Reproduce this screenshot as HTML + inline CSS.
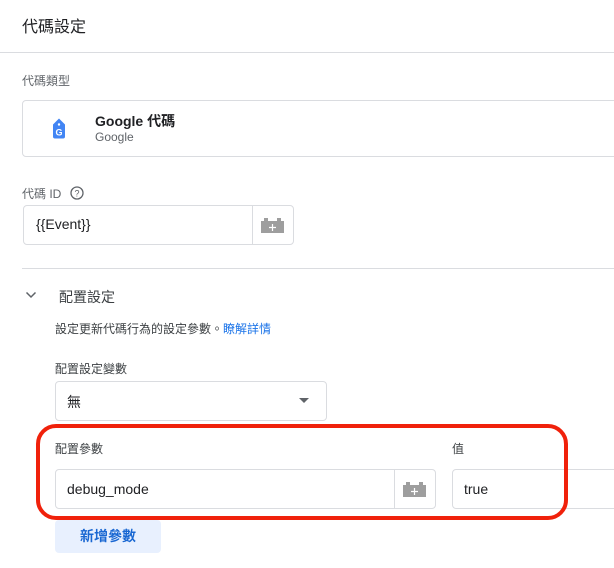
<!DOCTYPE html>
<html><head><meta charset="utf-8"><style>
*{box-sizing:border-box;margin:0;padding:0}
body{width:614px;height:568px;overflow:hidden;background:#fff;font-family:"Liberation Sans","Noto Sans CJK TC",sans-serif;color:#202124;position:relative}
.a{position:absolute;white-space:nowrap}
.box{position:absolute;border:1px solid #dadce0;border-radius:4px;background:#fff}
.lbl{font-size:12px;color:#5f6368}
</style></head><body>
<div class="a" style="left:22px;top:13px;font-size:16px;">代碼設定</div>
<div class="a" style="left:0;top:52px;width:614px;height:1px;background:#dadce0"></div>
<div class="a lbl" style="left:22px;top:72px">代碼類型</div>
<div class="box" style="left:22px;top:100px;width:600px;height:57px"></div>
<svg class="a" style="left:51px;top:117px" width="16" height="23" viewBox="0 0 16 22"><path d="M8 1 L14 7 V19 a2 2 0 0 1-2 2 H4 a2 2 0 0 1-2-2 V7 Z" fill="#4285f4"/><circle cx="8" cy="7" r="1.2" fill="#fff"/><text x="8" y="18" font-size="9" font-weight="bold" fill="#fff" text-anchor="middle" font-family="Liberation Sans">G</text></svg>
<div class="a" style="left:95px;top:111px;font-size:14px;font-weight:bold">Google 代碼</div>
<div class="a" style="left:95px;top:130px;font-size:12px;color:#5f6368">Google</div>
<div class="a lbl" style="left:22px;top:185px">代碼 ID</div>
<svg class="a" style="left:70px;top:186px" width="14" height="14" viewBox="0 0 14 14"><circle cx="7" cy="7" r="6" fill="none" stroke="#5f6368" stroke-width="1.3"/><text x="7" y="10.5" font-size="9" fill="#5f6368" text-anchor="middle" font-family="Liberation Sans">?</text></svg>
<div class="box" style="left:23px;top:205px;width:271px;height:40px"></div>
<div class="a" style="left:252px;top:206px;width:1px;height:38px;background:#dadce0"></div>
<div class="a" style="left:36px;top:216px;font-size:14px">{{Event}}</div>
<svg class="a" style="left:261px;top:218px" width="23" height="15" viewBox="0 0 23 15"><path d="M0 3h3V0h4v3h9V0h4v3h3v12H0z" fill="#9e9e9e"/><path d="M11.5 6v7M8 9.5h7" stroke="#fff" stroke-width="1.2"/></svg>
<div class="a" style="left:22px;top:268px;width:592px;height:1px;background:#dadce0"></div>
<svg class="a" style="left:25px;top:291px" width="12" height="8" viewBox="0 0 12 8"><path d="M1.5 1.5l4.5 4.5 4.5-4.5" fill="none" stroke="#5f6368" stroke-width="1.5"/></svg>
<div class="a" style="left:59px;top:287px;font-size:14px;color:#3c4043">配置設定</div>
<div class="a" style="left:55px;top:320px;font-size:12px;color:#3c4043">設定更新代碼行為的設定參數。<span style="color:#1a73e8">瞭解詳情</span></div>
<div class="a lbl" style="left:55px;top:360px;color:#3c4043">配置設定變數</div>
<div class="box" style="left:55px;top:381px;width:272px;height:40px"></div>
<div class="a" style="left:67px;top:392px;font-size:14px">無</div>
<div class="a" style="left:299px;top:398px;width:0;height:0;border-left:5px solid transparent;border-right:5px solid transparent;border-top:5px solid #5f6368"></div>
<div class="a lbl" style="left:55px;top:440px;color:#3c4043">配置參數</div>
<div class="a lbl" style="left:452px;top:440px;color:#3c4043">值</div>
<div class="box" style="left:55px;top:469px;width:381px;height:40px"></div>
<div class="a" style="left:394px;top:470px;width:1px;height:38px;background:#dadce0"></div>
<div class="a" style="left:67px;top:481px;font-size:14px">debug_mode</div>
<svg class="a" style="left:403px;top:482px" width="23" height="15" viewBox="0 0 23 15"><path d="M0 3h3V0h4v3h9V0h4v3h3v12H0z" fill="#9e9e9e"/><path d="M11.5 6v7M8 9.5h7" stroke="#fff" stroke-width="1.2"/></svg>
<div class="box" style="left:452px;top:469px;width:180px;height:40px"></div>
<div class="a" style="left:464px;top:481px;font-size:14px">true</div>
<div class="a" style="left:55px;top:520px;width:106px;height:33px;background:#e8f0fe;border-radius:4px;color:#1967d2;font-size:14px;font-weight:bold;text-align:center;line-height:33px">新增參數</div>
<div class="a" style="left:36px;top:424px;width:532px;height:96px;border:4px solid #f0210b;border-radius:20px"></div>
</body></html>
